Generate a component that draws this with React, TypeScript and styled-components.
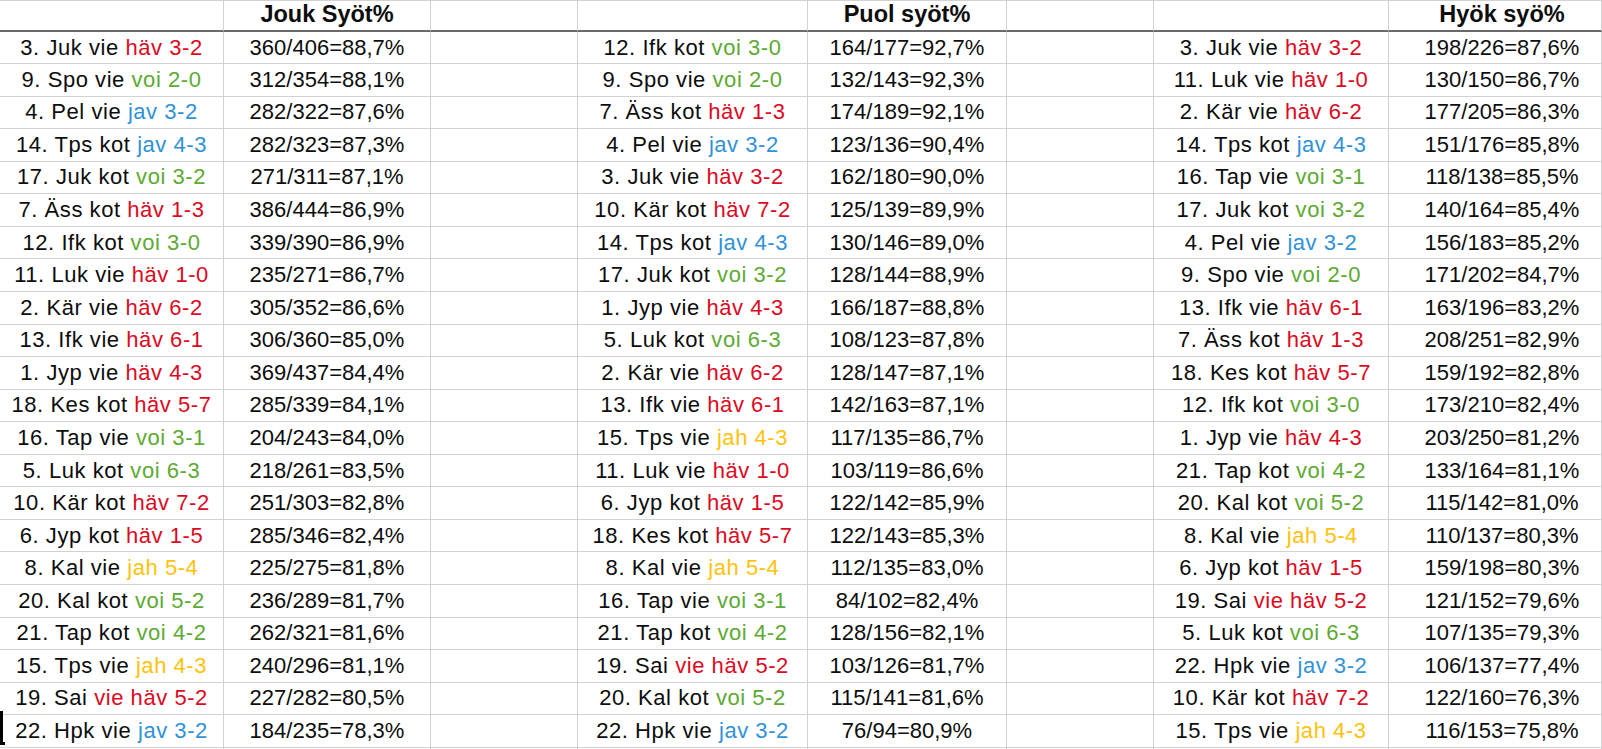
import React from "react";
import styled, { createGlobalStyle } from "styled-components";

const GlobalStyle = createGlobalStyle`
  html, body {
    margin: 0;
    padding: 0;
    background: #ffffff;
    overflow: hidden;
  }
  body {
    font-family: "Liberation Sans", Arial, sans-serif;
  }
`;

type Tone = "red" | "green" | "blue" | "yellow";

const toneColor: Record<Tone, string> = {
  red: "#dc0a1e",
  green: "#5caa32",
  blue: "#2f92d8",
  yellow: "#ffc20c",
};

type Entry = { lead: string; tone: Tone; result: string; stat: string };

const e = (lead: string, tone: Tone, result: string, stat: string): Entry => ({
  lead,
  tone,
  result,
  stat,
});

const jouk: Entry[] = [
  e("3. Juk vie", "red", "häv 3-2", "360/406=88,7%"),
  e("9. Spo vie", "green", "voi 2-0", "312/354=88,1%"),
  e("4. Pel vie", "blue", "jav 3-2", "282/322=87,6%"),
  e("14. Tps kot", "blue", "jav 4-3", "282/323=87,3%"),
  e("17. Juk kot", "green", "voi 3-2", "271/311=87,1%"),
  e("7. Äss kot", "red", "häv 1-3", "386/444=86,9%"),
  e("12. Ifk kot", "green", "voi 3-0", "339/390=86,9%"),
  e("11. Luk vie", "red", "häv 1-0", "235/271=86,7%"),
  e("2. Kär vie", "red", "häv 6-2", "305/352=86,6%"),
  e("13. Ifk vie", "red", "häv 6-1", "306/360=85,0%"),
  e("1. Jyp vie", "red", "häv 4-3", "369/437=84,4%"),
  e("18. Kes kot", "red", "häv 5-7", "285/339=84,1%"),
  e("16. Tap vie", "green", "voi 3-1", "204/243=84,0%"),
  e("5. Luk kot", "green", "voi 6-3", "218/261=83,5%"),
  e("10. Kär kot", "red", "häv 7-2", "251/303=82,8%"),
  e("6. Jyp kot", "red", "häv 1-5", "285/346=82,4%"),
  e("8. Kal vie", "yellow", "jah 5-4", "225/275=81,8%"),
  e("20. Kal kot", "green", "voi 5-2", "236/289=81,7%"),
  e("21. Tap kot", "green", "voi 4-2", "262/321=81,6%"),
  e("15. Tps vie", "yellow", "jah 4-3", "240/296=81,1%"),
  e("19. Sai", "red", "vie häv 5-2", "227/282=80,5%"),
  e("22. Hpk vie", "blue", "jav 3-2", "184/235=78,3%"),
];

const puol: Entry[] = [
  e("12. Ifk kot", "green", "voi 3-0", "164/177=92,7%"),
  e("9. Spo vie", "green", "voi 2-0", "132/143=92,3%"),
  e("7. Äss kot", "red", "häv 1-3", "174/189=92,1%"),
  e("4. Pel vie", "blue", "jav 3-2", "123/136=90,4%"),
  e("3. Juk vie", "red", "häv 3-2", "162/180=90,0%"),
  e("10. Kär kot", "red", "häv 7-2", "125/139=89,9%"),
  e("14. Tps kot", "blue", "jav 4-3", "130/146=89,0%"),
  e("17. Juk kot", "green", "voi 3-2", "128/144=88,9%"),
  e("1. Jyp vie", "red", "häv 4-3", "166/187=88,8%"),
  e("5. Luk kot", "green", "voi 6-3", "108/123=87,8%"),
  e("2. Kär vie", "red", "häv 6-2", "128/147=87,1%"),
  e("13. Ifk vie", "red", "häv 6-1", "142/163=87,1%"),
  e("15. Tps vie", "yellow", "jah 4-3", "117/135=86,7%"),
  e("11. Luk vie", "red", "häv 1-0", "103/119=86,6%"),
  e("6. Jyp kot", "red", "häv 1-5", "122/142=85,9%"),
  e("18. Kes kot", "red", "häv 5-7", "122/143=85,3%"),
  e("8. Kal vie", "yellow", "jah 5-4", "112/135=83,0%"),
  e("16. Tap vie", "green", "voi 3-1", "84/102=82,4%"),
  e("21. Tap kot", "green", "voi 4-2", "128/156=82,1%"),
  e("19. Sai", "red", "vie häv 5-2", "103/126=81,7%"),
  e("20. Kal kot", "green", "voi 5-2", "115/141=81,6%"),
  e("22. Hpk vie", "blue", "jav 3-2", "76/94=80,9%"),
];

const hyok: Entry[] = [
  e("3. Juk vie", "red", "häv 3-2", "198/226=87,6%"),
  e("11. Luk vie", "red", "häv 1-0", "130/150=86,7%"),
  e("2. Kär vie", "red", "häv 6-2", "177/205=86,3%"),
  e("14. Tps kot", "blue", "jav 4-3", "151/176=85,8%"),
  e("16. Tap vie", "green", "voi 3-1", "118/138=85,5%"),
  e("17. Juk kot", "green", "voi 3-2", "140/164=85,4%"),
  e("4. Pel vie", "blue", "jav 3-2", "156/183=85,2%"),
  e("9. Spo vie", "green", "voi 2-0", "171/202=84,7%"),
  e("13. Ifk vie", "red", "häv 6-1", "163/196=83,2%"),
  e("7. Äss kot", "red", "häv 1-3", "208/251=82,9%"),
  e("18. Kes kot", "red", "häv 5-7", "159/192=82,8%"),
  e("12. Ifk kot", "green", "voi 3-0", "173/210=82,4%"),
  e("1. Jyp vie", "red", "häv 4-3", "203/250=81,2%"),
  e("21. Tap kot", "green", "voi 4-2", "133/164=81,1%"),
  e("20. Kal kot", "green", "voi 5-2", "115/142=81,0%"),
  e("8. Kal vie", "yellow", "jah 5-4", "110/137=80,3%"),
  e("6. Jyp kot", "red", "häv 1-5", "159/198=80,3%"),
  e("19. Sai", "red", "vie häv 5-2", "121/152=79,6%"),
  e("5. Luk kot", "green", "voi 6-3", "107/135=79,3%"),
  e("22. Hpk vie", "blue", "jav 3-2", "106/137=77,4%"),
  e("10. Kär kot", "red", "häv 7-2", "122/160=76,3%"),
  e("15. Tps vie", "yellow", "jah 4-3", "116/153=75,8%"),
];

const Sheet = styled.div`
  position: relative;
  width: 1602px;
  height: 749px;
  overflow: hidden;
  background: #fff;
`;

const Grid = styled.div`
  display: grid;
  grid-template-columns: 224px 207px 147px 230px 199px 147px 235px 213px;
  grid-template-rows: 31px 32px repeat(22, 32.571px);
  border-top: 1px solid #d2d2d2;
`;

const Cell = styled.div<{ $shift?: number }>`
  box-sizing: border-box;
  display: flex;
  align-items: center;
  justify-content: center;
  padding-left: ${(p) => (p.$shift ? `${p.$shift}px` : "0")};
  border-right: 1px solid #d2d2d2;
  border-bottom: 1px solid #d2d2d2;
  font-family: "Liberation Sans", Arial, sans-serif;
  font-size: 22px;
  color: #0d0d0d;
  white-space: nowrap;
  overflow: hidden;
  line-height: 1;
`;

const HeadCell = styled(Cell)`
  border-bottom: 2px solid #6a6a6a;
  font-weight: 700;
  font-size: 23.5px;
  padding-bottom: 1px;
`;

const GameText = styled(Cell)`
  letter-spacing: 0.55px;
`;

const Result = styled.span<{ $tone: Tone }>`
  color: ${(p) => toneColor[p.$tone]};
`;

const SelectionMark = styled.div`
  position: absolute;
  left: 0;
  top: 711px;
  width: 3px;
  height: 32px;
  background: #000;
  &::after {
    content: "";
    position: absolute;
    left: 0;
    bottom: -2px;
    width: 5px;
    height: 3px;
    background: #000;
  }
`;

const GameCell: React.FC<{ entry: Entry }> = ({ entry }) => (
  <GameText>
    {entry.lead}&nbsp;<Result $tone={entry.tone}>{entry.result}</Result>
  </GameText>
);

export default function App() {
  const rows = jouk.map((_, i) => i);
  return (
    <Sheet>
      <GlobalStyle />
      <Grid>
        <HeadCell />
        <HeadCell>Jouk Syöt%</HeadCell>
        <HeadCell />
        <HeadCell />
        <HeadCell>Puol syöt%</HeadCell>
        <HeadCell />
        <HeadCell />
        <HeadCell $shift={14}>Hyök syö%</HeadCell>
        {rows.map((i) => (
          <React.Fragment key={i}>
            <GameCell entry={jouk[i]} />
            <Cell>{jouk[i].stat}</Cell>
            <Cell />
            <GameCell entry={puol[i]} />
            <Cell>{puol[i].stat}</Cell>
            <Cell />
            <GameCell entry={hyok[i]} />
            <Cell $shift={14}>{hyok[i].stat}</Cell>
          </React.Fragment>
        ))}
        {Array.from({ length: 8 }).map((_, k) => (
          <Cell key={`pad-${k}`} />
        ))}
      </Grid>
      <SelectionMark />
    </Sheet>
  );
}
